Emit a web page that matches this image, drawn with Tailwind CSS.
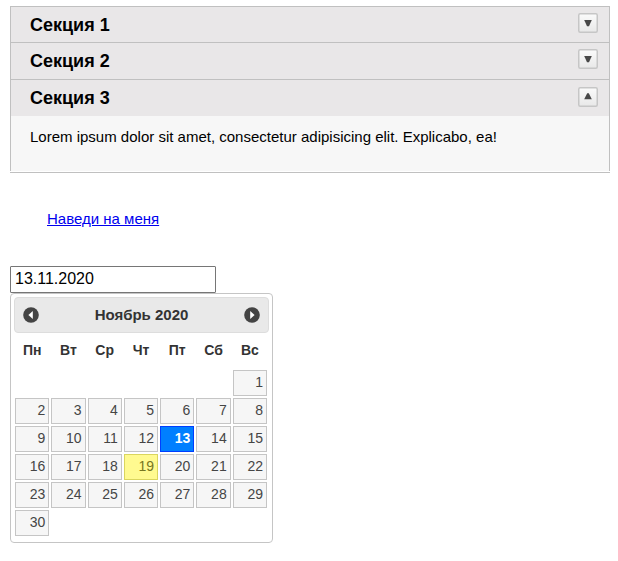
<!DOCTYPE html>
<html lang="ru">
<head>
<meta charset="utf-8">
<meta name="viewport" content="width=device-width, initial-scale=1">
<title>Виджеты</title>
<script src="https://cdn.jsdelivr.net/npm/@tailwindcss/browser@4"></script>
</head>
<body class="bg-white pt-[6px] pr-2 pl-[10px] font-['Liberation_Sans',Arial,sans-serif] text-[15px] leading-[18px] text-black">
<svg class="absolute size-0" aria-hidden="true">
  <defs>
    <linearGradient id="face" x1="0" y1="0" x2="0" y2="1"><stop offset="0" stop-color="#fbfbfb"/><stop offset="1" stop-color="#e8e8e8"/></linearGradient>
    <symbol id="down" viewBox="0 0 20 20"><rect x=".75" y=".75" width="18.5" height="18.5" rx="1.5" fill="url(#face)" stroke="#c6c6c6" stroke-width="1.5"/><path d="M6.2 7h7.6L11 13.3H9z" fill="#484848"/></symbol>
    <symbol id="up" viewBox="0 0 20 20"><rect x=".75" y=".75" width="18.5" height="18.5" rx="1.5" fill="url(#face)" stroke="#c6c6c6" stroke-width="1.5"/><path d="M6.2 12.3h7.6L10.8 6.3H9.2z" fill="#484848"/></symbol>
  </defs>
</svg>
<main>
  <section class="border-b border-[#c0c0c0] pb-px">
    <div class="border-x border-[#c0c0c0] bg-[#f7f7f7]">
      <h3><button type="button" aria-expanded="false" class="flex h-9 w-full items-center justify-between border-t border-[#c0c0c0] bg-[#e9e7e8] pr-[11px] pl-[19px] text-lg leading-5 font-bold">Секция 1<svg class="mb-[3px] size-5" aria-hidden="true"><use href="#down"/></svg></button></h3>
      <h3><button type="button" aria-expanded="false" class="flex h-[37px] w-full items-center justify-between border-t border-[#c0c0c0] bg-[#e9e7e8] pr-[11px] pl-[19px] text-lg leading-5 font-bold">Секция 2<svg class="mb-1 size-5" aria-hidden="true"><use href="#down"/></svg></button></h3>
      <h3><button type="button" aria-expanded="true" class="flex h-[37px] w-full items-center justify-between border-t border-[#c0c0c0] bg-[#e9e7e8] pr-[11px] pl-[19px] text-lg leading-5 font-bold">Секция 3<svg class="mb-[2px] size-5" aria-hidden="true"><use href="#up"/></svg></button></h3>
      <p class="px-[19px] pt-3 pb-[25px]">Lorem ipsum dolor sit amet, consectetur adipisicing elit. Explicabo, ea!</p>
    </div>
  </section>

  <p class="mt-[37px] pl-[37px]"><a href="#" class="text-[#0000ee] underline">Наведи на меня</a></p>

  <input type="text" value="13.11.2020" aria-label="Дата" class="mt-[38px] block h-[27px] w-[206px] rounded-[1px] border border-[#767676] bg-white px-1 pb-[2px] text-base leading-5">

  <section aria-label="Календарь" class="w-[263px] rounded-[4px] border border-[#c5c5c5] px-[3px] pt-[3px] pb-[5px] text-[#333]">
    <header class="flex h-9 items-center justify-between rounded-[4px] border border-[#dddddd] bg-[#e9e9e9] px-2 font-bold">
      <button type="button" aria-label="Предыдущий месяц"><svg class="size-4" viewBox="0 0 16 16" aria-hidden="true"><circle cx="8" cy="8" r="7.8" fill="#444"/><path d="M9.8 4v8L5.4 8z" fill="#fff"/></svg></button>
      <h2>Ноябрь 2020</h2>
      <button type="button" aria-label="Следующий месяц"><svg class="size-4" viewBox="0 0 16 16" aria-hidden="true"><circle cx="8" cy="8" r="7.8" fill="#444"/><path d="M6.2 4v8l4.4-4z" fill="#fff"/></svg></button>
    </header>
    <table class="w-[calc(100%-1px)] table-fixed border-collapse text-sm leading-4">
      <thead><tr class="h-9"><th class="pb-[2px]">Пн</th><th class="pb-[2px]">Вт</th><th class="pb-[2px]">Ср</th><th class="pb-[2px]">Чт</th><th class="pb-[2px]">Пт</th><th class="pb-[2px]">Сб</th><th class="pb-[2px]">Вс</th></tr></thead>
      <tbody id="days"></tbody>
    </table>
  </section>
</main>
<script>
  const body = document.getElementById('days');
  const base = 'block h-[26px] border pt-[3px] pr-[3px] text-right ';
  const plain = base + 'border-[#c5c5c5] bg-[#f6f6f6] text-[#454545]';
  const today = base + 'border-[#dad55e] bg-[#fffa90] text-[#777620]';
  const selected = base + 'border-[#003eff] bg-[#007fff] font-bold text-white';
  for (let start = -5; start <= 30; start += 7) {
    const row = body.insertRow();
    for (let d = start; d < start + 7; d++) {
      const cell = row.insertCell();
      cell.className = 'p-px';
      if (d < 1 || d > 30) continue;
      const link = document.createElement('a');
      link.href = '#';
      link.textContent = d;
      link.className = d === 13 ? selected : d === 19 ? today : plain;
      cell.append(link);
    }
  }
</script>
</body>
</html>
